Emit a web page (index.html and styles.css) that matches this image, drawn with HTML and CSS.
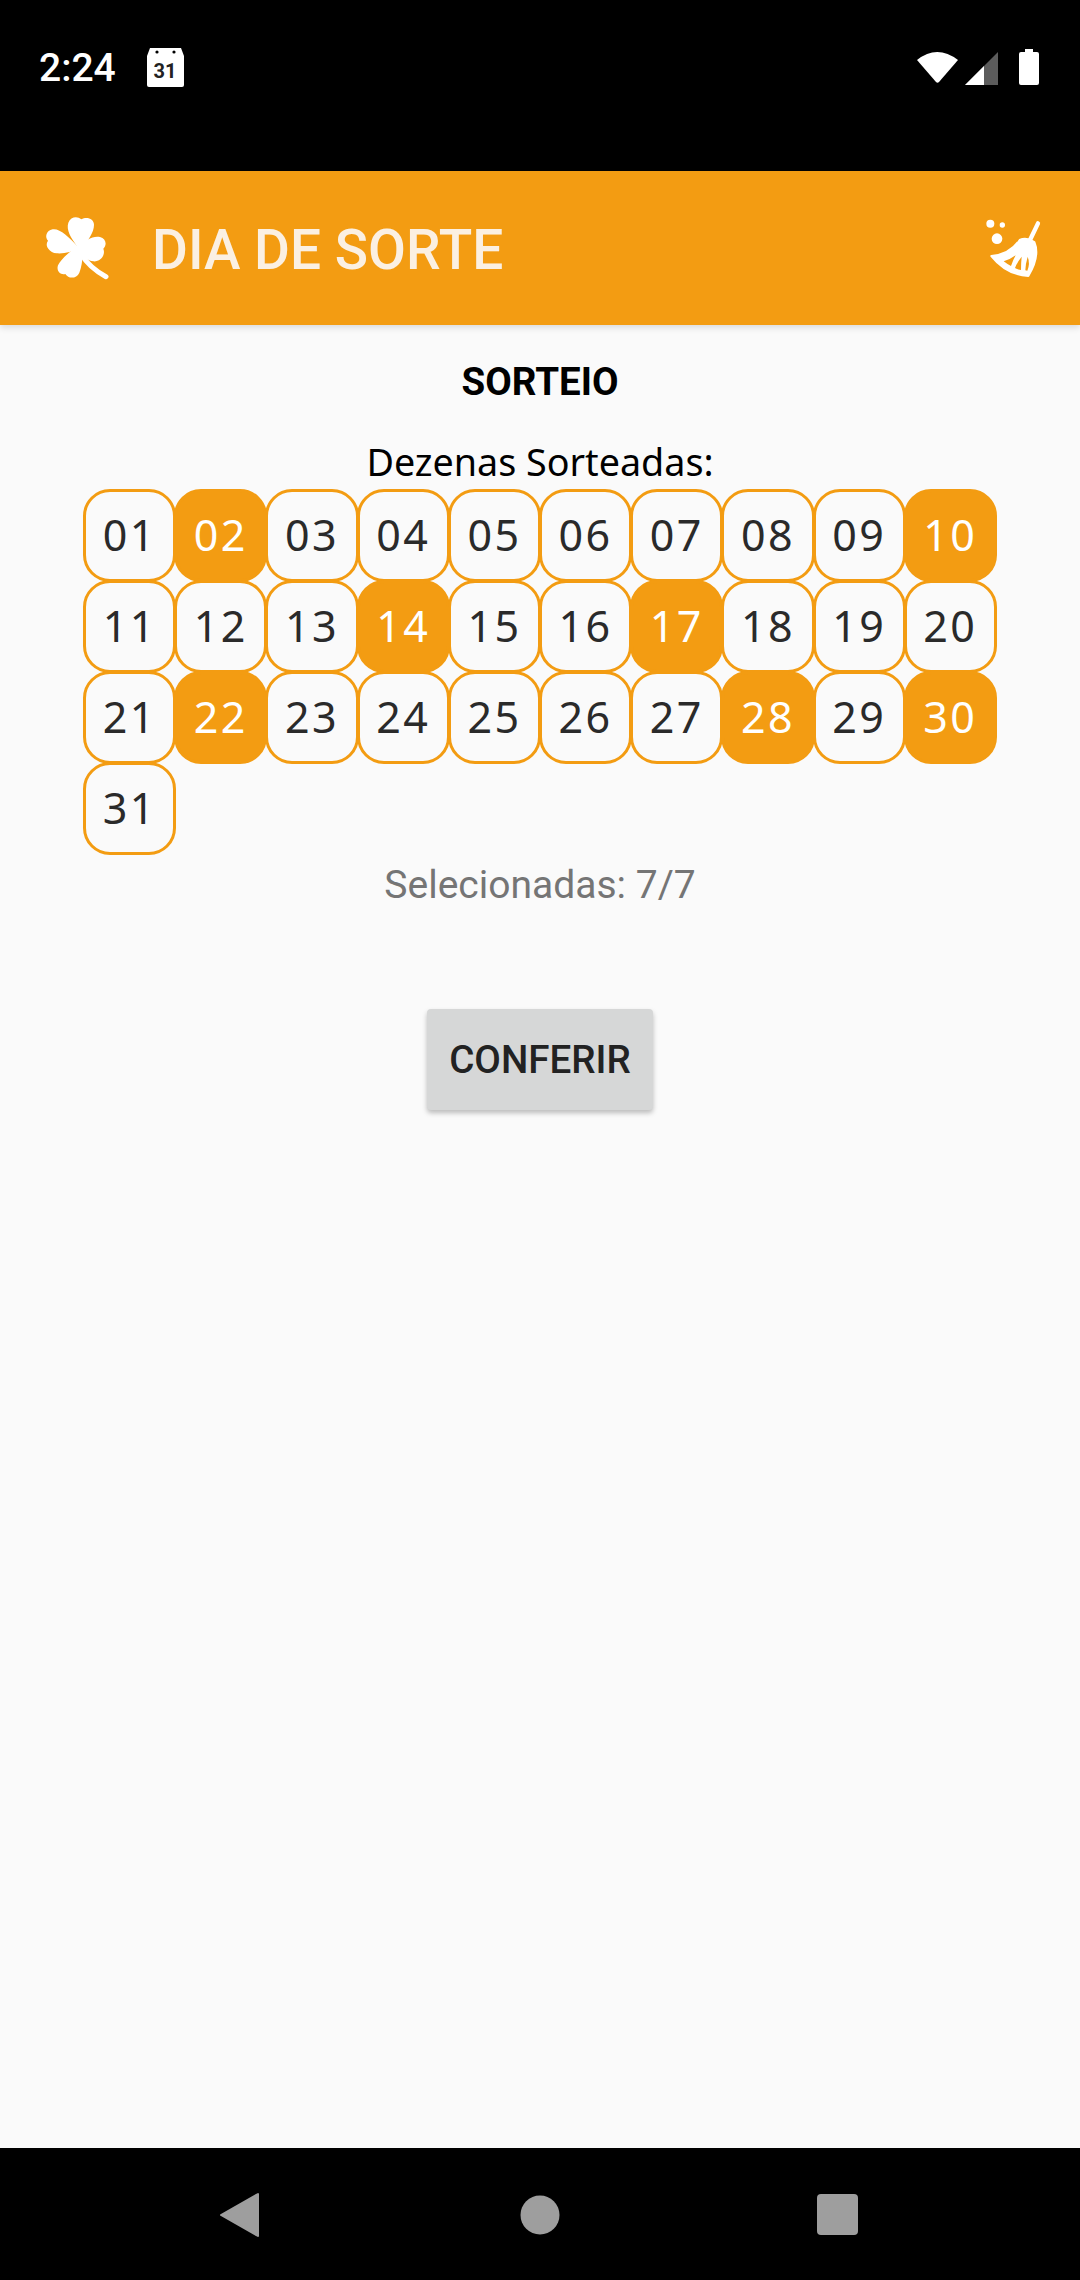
FILE: index.html
```html
<!DOCTYPE html>
<html>
	<head>
		<meta charset="UTF-8">
		<title>Dia de Sorte</title>
		<link rel="stylesheet" href="styles.css">
	</head>
	<body>
		<div class="status">
			<span class="time">2:24</span>
			<svg class="cal" viewBox="0 0 37 39">
				<path d="M3 0H34L37 8V37Q37 39 35 39H2Q0 39 0 37V8Z" fill="#fff"/>
				<circle cx="10" cy="4" r="1.6" fill="#000"/>
				<circle cx="27" cy="4" r="1.6" fill="#000"/>
				<text class="cal-num" x="18" y="30" text-anchor="middle">31</text>
			</svg>
			<span class="status-space"></span>
			<svg class="wifi" viewBox="0 0 41 32">
				<path d="M0 9Q20 -7 41 9L22 31Q20.500 32.500 19 31Z" fill="#fff"/>
			</svg>
			<svg class="signal" viewBox="0 0 33 33">
				<path d="M0 33L33 0V33Z" fill="#5c5c5c"/>
				<path d="M0 33L19 14V33Z" fill="#fff"/>
			</svg>
			<svg class="battery" viewBox="0 0 20 36">
				<path d="M6 0H14V3H18Q20 3 20 5V34Q20 36 18 36H2Q0 36 0 34V5Q0 3 2 3H6Z" fill="#fff"/>
			</svg>
		</div>
		<div class="toolbar">
			<svg class="clover" viewBox="72 75 198 198">
				<path d="M172 170C152 142 138 120 145 98C152 80 172 78 184 88C200 78 222 86 222 104C222 128 204 150 186 176Z" fill="#fff"/>
				<path d="M176 172C145 140 120 115 98 118C78 122 74 142 84 152C72 168 90 188 110 190C134 192 156 184 180 176Z" fill="#fff"/>
				<path d="M170 172C196 150 220 136 240 141C258 146 262 164 250 176C258 196 240 216 220 214C200 212 186 196 172 180Z" fill="#fff"/>
				<path d="M176 166C150 184 124 206 114 226C108 244 122 256 136 252C146 268 170 266 178 248C186 228 190 200 186 172Z" fill="#fff"/>
				<path d="M182 190Q208 234 258 260" fill="none" stroke="#fff" stroke-width="15" stroke-linecap="round"/>
			</svg>
			<span class="app-title">DIA DE SORTE</span>
			<svg class="broom" viewBox="70 50 192 192">
				<circle cx="92" cy="73" r="12" fill="#fff"/>
				<circle cx="128" cy="77" r="8" fill="#fff"/>
				<circle cx="112" cy="118" r="16" fill="#fff"/>
				<path d="M235 72L211 122" fill="none" stroke="#fff" stroke-width="13" stroke-linecap="round"/>
				<path d="M95 170Q150 166 180 122Q200 112 224 128Q242 170 206 230Q140 226 95 170Z" fill="#fff" stroke="#fff" stroke-width="6" stroke-linejoin="round"/>
				<path d="M132 186Q152 180 168 168Q160 182 154 200Q142 194 132 186Z" fill="#f39c12"/>
				<path d="M166 206Q174 186 186 172Q184 190 184 212Q174 210 166 206Z" fill="#f39c12"/>
				<path d="M197 213Q198 192 204 172Q212 192 203 214Z" fill="#f39c12"/>
			</svg>
		</div>
		<div class="content">
			<div class="heading">SORTEIO</div>
			<div class="label">Dezenas Sorteadas:</div>
			<div class="grid">
				<div class="cell">01</div>
				<div class="cell on">02</div>
				<div class="cell">03</div>
				<div class="cell">04</div>
				<div class="cell">05</div>
				<div class="cell">06</div>
				<div class="cell">07</div>
				<div class="cell">08</div>
				<div class="cell">09</div>
				<div class="cell on">10</div>
				<div class="cell">11</div>
				<div class="cell">12</div>
				<div class="cell">13</div>
				<div class="cell on">14</div>
				<div class="cell">15</div>
				<div class="cell">16</div>
				<div class="cell on">17</div>
				<div class="cell">18</div>
				<div class="cell">19</div>
				<div class="cell">20</div>
				<div class="cell">21</div>
				<div class="cell on">22</div>
				<div class="cell">23</div>
				<div class="cell">24</div>
				<div class="cell">25</div>
				<div class="cell">26</div>
				<div class="cell">27</div>
				<div class="cell on">28</div>
				<div class="cell">29</div>
				<div class="cell on">30</div>
				<div class="cell">31</div>
			</div>
			<div class="count">Selecionadas: 7/7</div>
			<div class="btn">CONFERIR</div>
		</div>
		<div class="nav">
			<svg class="nav-icon" viewBox="0 0 60 60">
				<path d="M11 30L48 9V51Z" fill="#9e9e9e" stroke="#9e9e9e" stroke-width="2" stroke-linejoin="round"/>
			</svg>
			<svg class="nav-icon" viewBox="0 0 60 60">
				<circle cx="30" cy="30" r="19.500" fill="#9e9e9e"/>
			</svg>
			<svg class="nav-icon" viewBox="0 0 60 60">
				<rect x="7" y="9" width="41" height="41" rx="4" fill="#9e9e9e"/>
			</svg>
		</div>
	</body>
</html>
```
FILE: styles.css
```css
* {
	margin: 0;
	padding: 0;
	box-sizing: border-box;
}

body {
	width: 1080px;
	height: 2280px;
	display: flex;
	flex-direction: column;
	background: #fafafa;
	font-family: Roboto, "Liberation Sans", sans-serif;
	overflow: hidden;
}

.status {
	height: 171px;
	background: #000;
	display: flex;
	align-items: flex-start;
	padding: 48px 41px 0 39px;
}
.time {
	color: #fff;
	font-size: 39px;
	font-weight: 500;
	line-height: 40px;
}
.cal {
	width: 37px;
	height: 39px;
	margin-left: 31px;
}
.cal-num {
	font-family: Roboto, sans-serif;
	font-weight: 700;
	font-size: 20px;
	fill: #222;
}
.status-space {
	flex: 1;
}
.wifi {
	width: 41px;
	height: 32px;
	margin-top: 3px;
}
.signal {
	width: 33px;
	height: 33px;
	margin: 4px 0 0 7px;
}
.battery {
	width: 20px;
	height: 36px;
	margin: 1px 0 0 21px;
}

.toolbar {
	height: 154px;
	background: #f39c12;
	display: flex;
	align-items: center;
	padding: 4px 33px 0 44px;
	box-shadow: 0 3px 6px rgba(0,0,0,0.12);
	position: relative;
}
.clover {
	width: 66px;
	height: 66px;
	margin-top: -4px;
}
.app-title {
	flex: 1;
	margin-left: 42px;
	color: #fbf0e2;
	font-size: 55px;
	font-weight: 500;
}
.broom {
	width: 64px;
	height: 64px;
	margin-top: -4px;
}

.content {
	flex: 1;
	display: flex;
	flex-direction: column;
	align-items: center;
}
.heading {
	margin-top: 35px;
	font-size: 38.5px;
	font-weight: 700;
	line-height: 43px;
	color: #000;
}
.label {
	margin-top: 37px;
	font-family: "Noto Sans", sans-serif;
	font-size: 37.7px;
	line-height: 44px;
	color: #000;
}
.grid {
	align-self: center;
	margin: 5px 2px 0 0;
	display: grid;
	grid-template-columns: repeat(10, 91.2px);
	grid-auto-rows: 91px;
}
.cell {
	margin: 0 -2px -2px 0;
	border: 3px solid #f39c12;
	border-radius: 27px;
	background: #fafafa;
	display: flex;
	align-items: center;
	justify-content: center;
	padding-bottom: 2px;
	font-family: "Noto Sans", sans-serif;
	font-size: 43px;
	letter-spacing: 2.4px;
	color: #2a2a2a;
}
.cell.on {
	background: #f39c12;
	color: #fff;
}
.count {
	margin-top: 10px;
	font-size: 39px;
	line-height: 44px;
	color: #757575;
}
.btn {
	margin-top: 102px;
	width: 226px;
	height: 101px;
	background: #d6d7d7;
	border-radius: 4px;
	box-shadow: 0 3px 5px rgba(0,0,0,0.25);
	display: flex;
	align-items: center;
	justify-content: center;
	font-size: 38.6px;
	font-weight: 500;
	color: #222;
}

.nav {
	height: 132px;
	background: #000;
	display: flex;
	align-items: flex-start;
	gap: 240px;
	padding: 37px 0 0 210px;
}
.nav-icon {
	width: 60px;
	height: 60px;
}
```
